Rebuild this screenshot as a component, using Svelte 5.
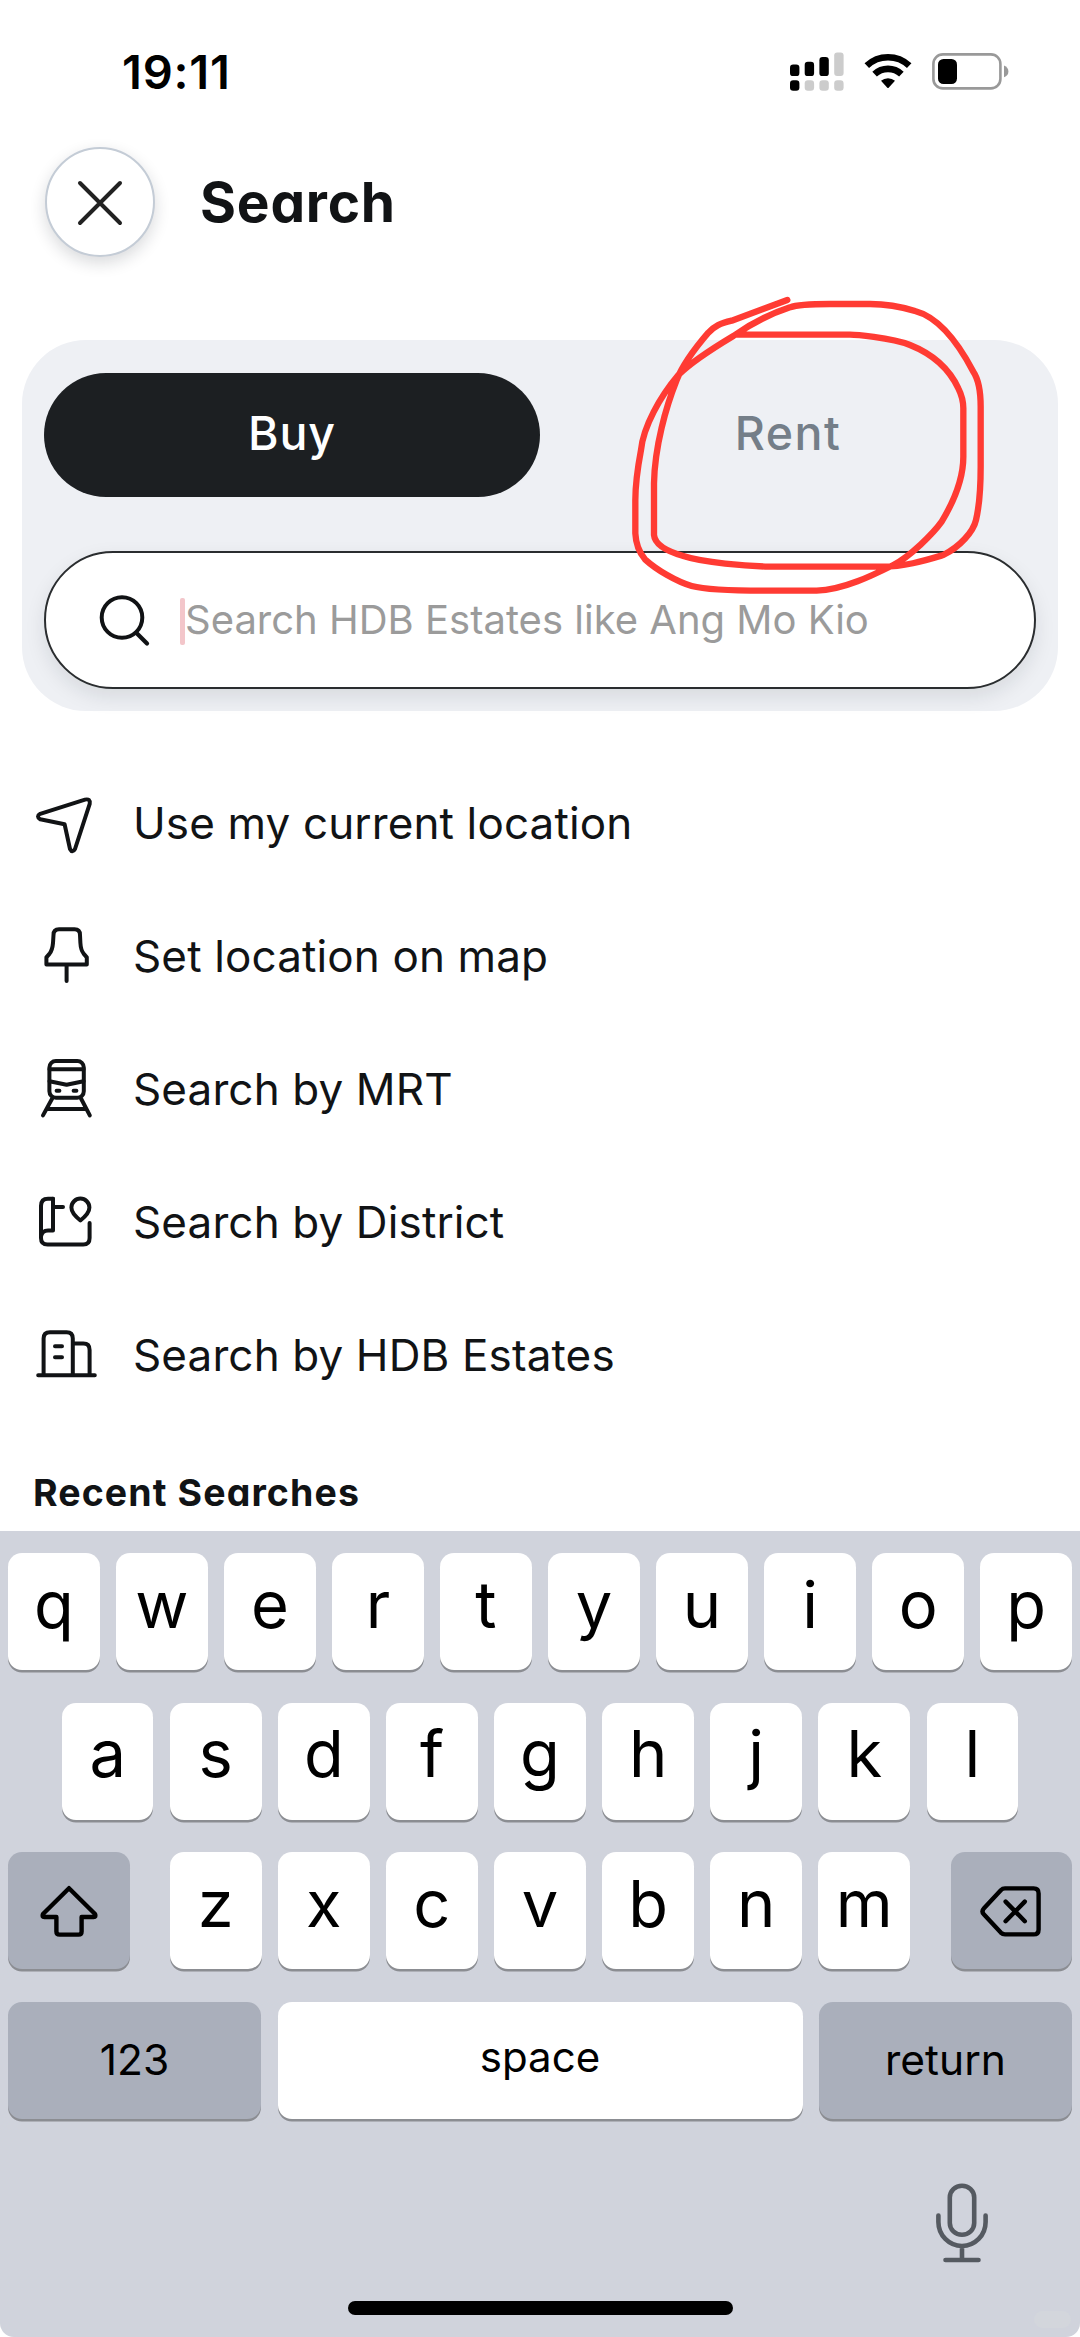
<script>
  const rows = ['qwertyuiop', 'asdfghjkl'];
  const thirdRow = 'zxcvbnm';
  const options = [
    { icon: 'arrow', label: 'Use my current location' },
    { icon: 'pin', label: 'Set location on map' },
    { icon: 'train', label: 'Search by MRT' },
    { icon: 'district', label: 'Search by District' },
    { icon: 'building', label: 'Search by HDB Estates' }
  ];
</script>

<div class="screen">
  <header class="status">
    <span class="time">19:11</span>
    <div class="indicators">
      <svg class="signal" width="54" height="40" viewBox="0 0 54 40">
        <g fill="#000">
          <rect x="0" y="12.5" width="9.4" height="11.6" rx="3.2" />
          <rect x="14.7" y="9.8" width="9.4" height="14.3" rx="3.2" />
          <rect x="29.4" y="5" width="9.4" height="19.1" rx="3.2" />
          <rect x="0" y="28.2" width="9.4" height="10.6" rx="3.2" />
        </g>
        <g fill="#ccc">
          <rect x="44.2" y="0.4" width="9.4" height="23.7" rx="3" />
          <rect x="14.7" y="28.2" width="9.4" height="10.6" rx="3.2" />
          <rect x="29.4" y="28.2" width="9.4" height="10.6" rx="3.2" />
          <rect x="44.2" y="28.2" width="9.4" height="10.6" rx="3.2" />
        </g>
      </svg>
      <svg class="wifi" width="48" height="40" viewBox="0 0 48 40">
        <g fill="none" stroke="#000" stroke-width="6.6">
          <path d="M2.8 13.6 A31 31 0 0 1 45.2 13.6" />
          <path d="M10.6 22.2 A19.5 19.5 0 0 1 37.4 22.2" />
        </g>
        <path d="M17 28.8 A10.5 10.5 0 0 1 31 28.8 L24.9 35.6 Q24 36.6 23.1 35.6 Z" />
      </svg>
      <svg class="battery" width="77" height="40" viewBox="0 0 77 40">
        <rect x="1.4" y="2.4" width="67" height="34" rx="9.5" fill="none" stroke="#999" stroke-width="2.6" />
        <rect x="6" y="7" width="19" height="25" rx="5.5" />
        <path d="M72 13.6 Q76.4 15.4 76.4 19.5 Q76.4 23.6 72 25.2 Z" fill="#999" />
      </svg>
    </div>
  </header>

  <div class="titlebar">
    <button class="close" aria-label="Close">
      <svg width="46" height="46" viewBox="0 0 46 46">
        <path d="M3 3 43 43M43 3 3 43" stroke="#222" stroke-width="4" stroke-linecap="round" />
      </svg>
    </button>
    <h1>Search</h1>
  </div>

  <section class="panel">
    <div class="tabs">
      <div class="tab active">Buy</div>
      <div class="tab rent">Rent</div>
    </div>
    <div class="field">
      <svg width="54" height="54" viewBox="0 0 54 54">
        <circle cx="24" cy="24.5" r="20.3" fill="none" stroke="#101214" stroke-width="4" />
        <path d="M38.5 40 49 50.5" stroke="#101214" stroke-width="4.2" stroke-linecap="round" />
      </svg>
      <i class="caret"></i>
      <span class="placeholder">Search HDB Estates like Ang Mo Kio</span>
    </div>
    <svg class="scribble" width="520" height="450" viewBox="0 0 1560 1350">
      <path
        d="M682 60 L515 122 C480 130 465 138 445 158 C402 208 365 262 350 300 C318 380 284 500 282 610 V765 C285 798 335 818 370 828 C430 848 560 858 625 860 H960 C1030 862 1100 840 1150 825 C1200 800 1240 755 1248 720 C1262 660 1262 600 1262 560 V380 C1262 320 1250 290 1240 275 C1190 180 1130 110 1065 93 C1000 73 940 72 930 72 H810 C740 72 705 76 690 82 C620 105 560 140 520 168 C450 210 390 250 355 285 C300 350 250 440 243 510 C228 590 226 640 226 660 V760 C228 800 240 820 255 838 C290 870 350 905 395 918 C440 930 560 932 610 932 H770 C850 930 940 885 1000 855 C1050 830 1120 760 1145 725 C1190 650 1210 590 1210 530 V385 C1210 360 1205 345 1195 325 C1160 250 1100 215 1050 195 C990 172 880 164 870 164 H535"
        fill="none" stroke="#ff3b33" stroke-width="19" stroke-linecap="round" stroke-linejoin="round" />
    </svg>
  </section>

  <ul class="options">
    {#each options as option}
      <li>
        <svg class="icon" width="64" height="64" viewBox="0 0 64 64">
          {#if option.icon === 'arrow'}
            <path d="M6.2 22.8 51 8.6Q56.6 7.4 55.7 12.8L41 58Q38.4 62.6 36 58L30.6 33.2 6.2 28.2Q1.8 25.4 6.2 22.8Z" />
          {:else if option.icon === 'pin'}
            <path d="M19.5 11Q19.5 5.3 25 5.3H40.5Q46 5.3 46 11L46.4 19Q46.8 26 49.6 29.6L52.8 33.4V40.4H12.4V33.4L15.6 29.6Q18.4 26 19 19Z" />
            <path d="M32.6 41V57" />
          {:else if option.icon === 'train'}
            <rect x="15.4" y="4" width="34.4" height="36.8" rx="6.5" />
            <path d="M15.5 12.3H49.5M15.5 24.2 32.6 27.8 49.6 24.2M22.6 33.7H25.4M39.6 33.7H42.4M18.2 41.5 9 58.4M47 41.5 55.8 58.4M13 52H52.5" />
          {:else if option.icon === 'district'}
            <path d="M19 8.8H14Q7 8.8 7 16V48Q7 54.6 13.6 54.6H49.2Q55.6 54.6 55.6 48V33" />
            <path d="M19 8.8V40.4H14Q8 40.4 7 46.5M19 17H29" />
            <path d="M46.4 30.5Q37.4 23.5 37.4 17.6A9 9 0 0 1 55.4 17.6Q55.4 23.5 46.4 30.5Z" />
          {:else}
            <path d="M9.6 52V15.5Q9.6 9.2 16 9.2H32.6Q38.8 9.2 38.8 15.5V52M39 20.6H49.4Q55.6 20.6 55.6 27V52M4.2 52.3H60.8M21 23.2H28M21 34.3H28" />
          {/if}
        </svg>
        <span>{option.label}</span>
      </li>
    {/each}
  </ul>

  <h2>Recent Searches</h2>

  <section class="keyboard">
    {#each rows as row}
      <div class="keys">
        {#each row as letter}
          <div class="key">{letter}</div>
        {/each}
      </div>
    {/each}
    <div class="keys spread">
      <div class="key dark mod">
        <svg width="60" height="54" viewBox="0 0 60 54">
          <path d="M30 4.2 56 30Q57.4 33 54.6 33H42.6V47.5Q42.6 50.6 39.6 50.6H20.6Q17.4 50.6 17.4 47.5V33H5.4Q2.6 33 4 30Z" />
        </svg>
      </div>
      <div class="keys letters">
        {#each thirdRow as letter}
          <div class="key">{letter}</div>
        {/each}
      </div>
      <div class="key dark mod">
        <svg width="62" height="54" viewBox="0 0 62 54">
          <path d="M25 4.4H53.6Q58.6 4.4 58.6 9.4V45.4Q58.6 50.4 53.6 50.4H25Q22.6 50.4 20.8 48.6L4 30.6Q1 27.4 4 24.2L20.8 6.2Q22.6 4.4 25 4.4ZM25.6 17.6 44.8 37.2M44.8 17.6 25.6 37.2" />
        </svg>
      </div>
    </div>
    <div class="keys">
      <div class="key dark word">123</div>
      <div class="key word space">space</div>
      <div class="key dark word">return</div>
    </div>
    <div class="mic">
      <svg width="54" height="82" viewBox="0 0 54 82">
        <path d="M14.8 15.5A12.2 11.8 0 0 1 39.2 15.5V41A12.2 11.8 0 0 1 14.8 41ZM3.4 33.5V40A23.6 24 0 0 0 50.6 40V33.5M27 64.5V78M10.5 78H43.5" />
      </svg>
    </div>
    <div class="homebar"></div>
    <i class="badge"></i>
  </section>
</div>

<style>
  :global(body) {
    margin: 0;
    background: #fff;
  }
  .screen {
    width: 1080px;
    height: 2337px;
    overflow: hidden;
    display: flex;
    flex-direction: column;
    background: #fff;
    color: #111315;
    font-family: Inter, 'Liberation Sans', sans-serif;
  }
  .status {
    height: 147px;
    box-sizing: border-box;
    padding: 42px 72px 0 122px;
    display: flex;
    justify-content: space-between;
  }
  .time {
    font-size: 47px;
    line-height: 60px;
    font-weight: 600;
    color: #000;
    letter-spacing: 0.8px;
  }
  .indicators {
    display: flex;
    padding-top: 10px;
  }
  .wifi {
    margin-left: 20px;
  }
  .battery {
    margin-left: 20px;
    margin-right: -1px;
  }
  .titlebar {
    display: flex;
    align-items: center;
    height: 110px;
    padding-left: 45px;
    gap: 45px;
  }
  .close {
    width: 110px;
    height: 110px;
    box-sizing: border-box;
    border: 2.4px solid #c4ccd6;
    border-radius: 50%;
    background: #fff;
    padding: 2px 0 0;
    display: flex;
    align-items: center;
    justify-content: center;
    box-shadow: 0 6px 16px rgba(20, 25, 40, 0.16);
  }
  h1 {
    margin: 0;
    font-size: 55px;
    line-height: 60px;
    font-weight: 700;
    letter-spacing: 0.8px;
    font-feature-settings: 'cv11';
  }
  .panel {
    position: relative;
    box-sizing: border-box;
    width: 1036px;
    height: 371px;
    margin: 83px 22px 0;
    padding: 33px 22px 0;
    border-radius: 64px;
    background: #eef0f4;
  }
  .tabs {
    display: flex;
    height: 124px;
  }
  .tab {
    flex: 1;
    border-radius: 62px;
    display: flex;
    align-items: center;
    justify-content: center;
    font-size: 46.5px;
    font-weight: 500;
    color: #747e88;
    padding-bottom: 4px;
    height: 120px;
    letter-spacing: 0.9px;
  }
  .active {
    background: #1c1f22;
    color: #fff;
  }
  .rent {
    letter-spacing: 1.5px;
  }
  .field {
    box-sizing: border-box;
    height: 138px;
    margin-top: 54px;
    border: 2.5px solid #2a2d2f;
    border-radius: 69px;
    background: #fff;
    padding: 0 0 0 52px;
    display: flex;
    align-items: center;
    box-shadow: 0 8px 20px rgba(20, 25, 40, 0.1);
  }
  .caret {
    width: 5px;
    height: 47px;
    border-radius: 2px;
    background: #f3c6ca;
    margin: 3px 0 0 28px;
  }
  .placeholder {
    font-size: 40px;
    line-height: 50px;
    color: #9b9b9b;
    white-space: nowrap;
  }
  /* hand-drawn marker loop laid over the Rent tab */
  .scribble {
    position: absolute;
    left: 538px;
    top: -60px;
    pointer-events: none;
  }
  .options {
    list-style: none;
    margin: 46px 0 0;
    padding: 0 0 0 34px;
  }
  .options li {
    height: 132.8px;
    display: flex;
    align-items: center;
    gap: 35px;
    font-size: 44px;
    letter-spacing: 0.13px;
    white-space: nowrap;
  }
  .icon {
    fill: none;
    stroke: #111315;
    stroke-width: 4;
    stroke-linecap: round;
    stroke-linejoin: round;
  }
  h2 {
    margin: 46px 0 0 33px;
    font-size: 37.5px;
    line-height: 52px;
    font-weight: 700;
    letter-spacing: 1.1px;
    font-feature-settings: 'cv11';
  }
  .keyboard {
    position: relative;
    box-sizing: border-box;
    flex: none;
    height: 806px;
    margin-top: auto;
    padding: 22px 8px 0;
    background: #d0d3dc;
    border-radius: 0 0 14px 14px;
    display: flex;
    flex-direction: column;
    gap: 32.6px;
  }
  .keys {
    display: flex;
    justify-content: center;
    gap: 16.5px;
  }
  .spread {
    justify-content: space-between;
  }
  .key {
    box-sizing: border-box;
    width: 91.6px;
    height: 117px;
    border-radius: 14px;
    background: #fff;
    box-shadow: 0 2.6px 0 #8b8d92;
    color: #000;
    font-size: 65px;
    font-weight: 370;
    line-height: 80px;
    padding-bottom: 14px;
    display: flex;
    align-items: center;
    justify-content: center;
  }
  .dark {
    background: #aaafbb;
  }
  .mod {
    width: 121.5px;
    padding: 0;
  }
  .mod svg {
    fill: none;
    stroke: #000;
    stroke-width: 4.4;
    stroke-linejoin: round;
    stroke-linecap: round;
  }
  .word {
    width: 253px;
    font-size: 42.5px;
    font-weight: 400;
    padding: 0;
  }
  .space {
    flex: 1;
    font-size: 42px;
    padding-bottom: 7px;
  }
  .mic {
    display: flex;
    justify-content: flex-end;
    padding: 31px 83px 0 0;
  }
  .mic svg {
    fill: none;
    stroke: #555a61;
    stroke-width: 4.6;
    stroke-linecap: round;
  }
  .homebar {
    position: absolute;
    left: 348px;
    bottom: 22px;
    width: 385px;
    height: 14px;
    border-radius: 7px;
    background: #000;
  }
  .badge {
    position: absolute;
    right: 9px;
    bottom: 9px;
    width: 37px;
    height: 17px;
    border-radius: 9px;
    background: #d3d6dc;
  }
</style>
